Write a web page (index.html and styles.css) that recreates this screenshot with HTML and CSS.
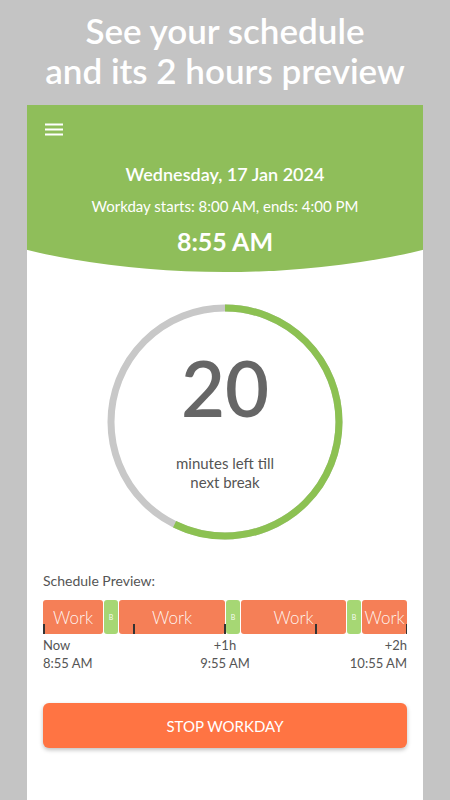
FILE: index.html
```html
<!DOCTYPE html>
<html lang="en">
<head>
<meta charset="utf-8">
<title>Schedule</title>
<link rel="stylesheet" href="styles.css">
</head>
<body>
<h1 class="hero">See your schedule<br>and its 2 hours preview</h1>
<main class="card">
  <header class="top">
    <svg class="menu" width="18" height="13" viewBox="0 0 18 13" aria-hidden="true">
      <path d="M0 1.5H18M0 6.5H18M0 11.5H18" stroke="#ffffff" stroke-width="2"/>
    </svg>
    <div class="date">Wednesday, 17 Jan 2024</div>
    <div class="hours">Workday starts: 8:00 AM, ends: 4:00 PM</div>
    <div class="now">8:55 AM</div>
  </header>

  <section class="timer">
    <svg class="ring" width="240" height="240" viewBox="0 0 240 240" aria-hidden="true">
      <circle cx="120" cy="120" r="114" fill="none" stroke="#c8c8c8" stroke-width="7"/>
      <circle cx="120" cy="120" r="114" fill="none" stroke="#8cc152" stroke-width="7"
        stroke-dasharray="410 716.3" transform="rotate(-90 120 120)"/>
    </svg>
    <div class="timer-text">
      <div class="minutes">20</div>
      <div class="caption">minutes left till<br>next break</div>
    </div>
  </section>

  <section class="preview">
    <div class="preview-title">Schedule Preview:</div>
    <div class="bar">
      <div class="seg work" style="flex-basis:60px">Work</div>
      <div class="seg brk" style="flex-basis:14px">B</div>
      <div class="seg work" style="flex-basis:106px">Work</div>
      <div class="seg brk" style="flex-basis:14px">B</div>
      <div class="seg work" style="flex-basis:105px">Work</div>
      <div class="seg brk" style="flex-basis:14px">B</div>
      <div class="seg work" style="flex-basis:45px">Work</div>
      <span class="tick t0"></span>
      <span class="tick t1"></span>
      <span class="tick t2"></span>
      <span class="tick t3"></span>
      <span class="tick t4"></span>
    </div>
    <div class="labels">
      <div class="lab left">Now<br>8:55 AM</div>
      <div class="lab mid">+1h<br>9:55 AM</div>
      <div class="lab right">+2h<br>10:55 AM</div>
    </div>
    <button class="stop">STOP WORKDAY</button>
  </section>
</main>
</body>
</html>
```

FILE: styles.css
```css
* { box-sizing: border-box; }
html, body {
  margin: 0;
  padding: 0;
}
body {
  width: 450px;
  height: 800px;
  overflow: hidden;
  background: #c4c4c4;
  font-family: Lato, "Open Sans", sans-serif;
}
.hero {
  margin: 0;
  padding-top: 10px;
  height: 92px;
  text-align: center;
  color: #ffffff;
  font-size: 35px;
  line-height: 40px;
  font-weight: 600;
}
.card {
  margin: 13px 27px 0;
  height: 695px;
  background: #ffffff;
  display: flex;
  flex-direction: column;
}
.top {
  height: 167px;
  background: #8fbe5a;
  clip-path: ellipse(399px 167px at 50% 0);
  color: #ffffff;
  display: flex;
  flex-direction: column;
  align-items: center;
  padding-top: 18px;
}
.menu {
  display: block;
  align-self: flex-start;
  margin-left: 18px;
}
.date {
  margin-top: 26px;
  font-size: 18px;
  line-height: 24px;
  font-weight: 600;
}
.hours {
  margin-top: 10px;
  font-size: 15px;
  line-height: 20px;
  font-weight: 400;
}
.now {
  margin-top: 10px;
  font-size: 25px;
  line-height: 30px;
  font-weight: 700;
}
.timer {
  margin: 30px auto 0;
  width: 240px;
  height: 240px;
  display: grid;
}
.ring, .timer-text {
  grid-area: 1 / 1;
}
.timer-text {
  display: flex;
  flex-direction: column;
  align-items: center;
  padding-top: 48px;
}
.minutes {
  font-size: 76px;
  line-height: 75px;
  font-weight: 600;
  color: #666666;
}
.caption {
  margin-top: 29px;
  text-align: center;
  font-size: 15px;
  line-height: 19px;
  color: #555555;
}
.preview {
  padding: 0 16px;
  display: flex;
  flex-direction: column;
}
.preview-title {
  margin-top: 30px;
  font-size: 14px;
  line-height: 18px;
  color: #555555;
}
.bar {
  margin-top: 10px;
  height: 34px;
  display: flex;
  gap: 1px;
  position: relative;
}
.seg {
  flex-grow: 0;
  flex-shrink: 0;
  border-radius: 3px;
  display: flex;
  align-items: center;
  justify-content: center;
  color: rgba(255, 255, 255, 0.92);
  overflow: hidden;
  white-space: nowrap;
}
.work {
  background: #f57f57;
  font-size: 17px;
  font-weight: 300;
}
.brk {
  background: #a6d774;
  font-size: 7px;
}
.tick {
  position: absolute;
  bottom: 0;
  width: 1.5px;
  height: 10px;
  background: #333333;
}
.t0 { left: 0; }
.t1 { left: calc(25% - 1px); }
.t2 { left: calc(50% - 1px); }
.t3 { left: calc(75% - 1px); }
.t4 { right: 0; }
.labels {
  margin-top: 2px;
  display: grid;
  grid-template-columns: 1fr 1fr 1fr;
  font-size: 13px;
  line-height: 18px;
  color: #555555;
}
.left { text-align: left; }
.mid { text-align: center; }
.right { text-align: right; }
.stop {
  margin-top: 31px;
  height: 45px;
  border: none;
  border-radius: 6px;
  background: #ff7443;
  color: #ffffff;
  font-family: Lato, "Open Sans", sans-serif;
  font-size: 15px;
  box-shadow: 0 2px 4px rgba(0, 0, 0, 0.25);
}
```
